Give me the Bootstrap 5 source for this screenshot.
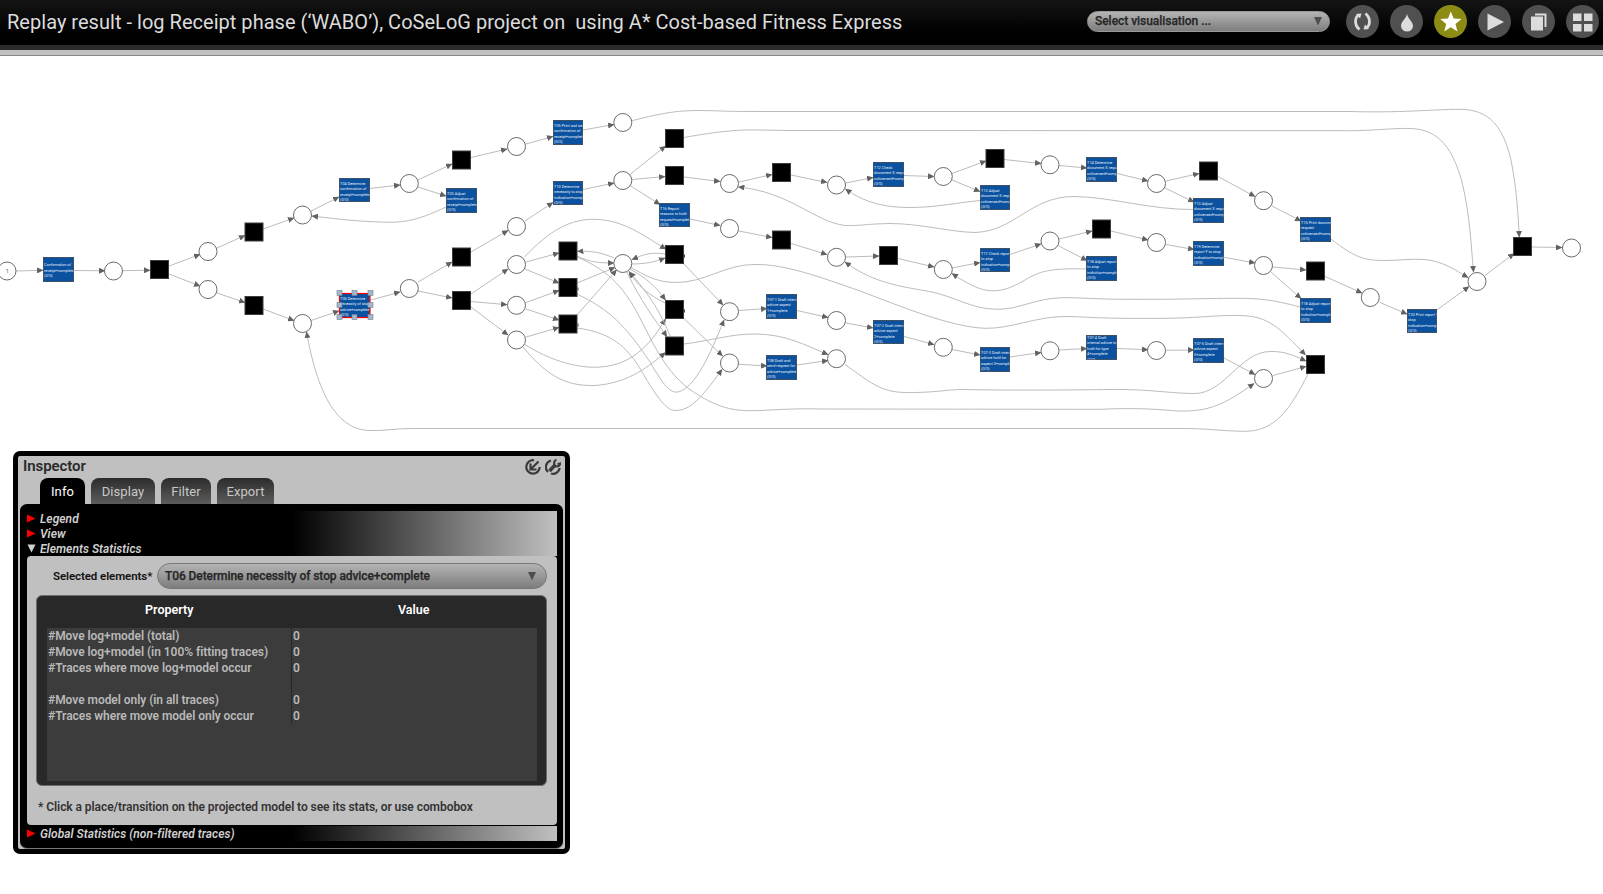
<!DOCTYPE html>
<html lang="en">
<head>
<meta charset="utf-8">
<title>Replay result</title>
<link href="https://cdn.jsdelivr.net/npm/bootstrap@5.3.0/dist/css/bootstrap.min.css" rel="stylesheet">
<script src="https://cdn.jsdelivr.net/npm/bootstrap@5.3.0/dist/js/bootstrap.bundle.min.js"></script>
<style>
body{font-family:Roboto,sans-serif;background:#fff;height:894px;line-height:1.2}
.topbar{height:56px;background:linear-gradient(#141414,#000 34px,#000 45px,#2b2b2b 45px,#2b2b2b 50px,#c0c0c0 50px,#c0c0c0 55px,#7f878d 55px)}
.topbar-in{height:42px;padding:0 4px 0 7px}
.page-title{font-size:20px;font-weight:400;color:#dcdcdc;letter-spacing:.026px;white-space:pre;padding-top:2px}
.combo{background:linear-gradient(#b4b4b4,#7d7d7d);border:1px solid #777;border-radius:14px;color:#262626;font-weight:500;-webkit-text-stroke:.25px #262626}
.combo-top{width:243px;height:21px;font-size:12px;padding:1px 7px 0;margin-right:16px;border-color:#999;letter-spacing:-.04px}
.combo-main{width:390px;height:26px;font-size:12px;padding:1px 10px 0 7px;letter-spacing:-.085px}
.tool-icon{width:33px;height:33px}
.canvas{height:838px}
.net{position:absolute;left:0;top:0}
.edge{fill:none;stroke:#bcbcbc;stroke-width:1}
.place{fill:#fff;stroke:#6b6b6b;stroke-width:1}
.silent{fill:#000;stroke:#3c3c3c;stroke-width:1}
.task{fill:#0a519f;stroke:#3f5265;stroke-width:1}
.net text{font-size:3.85px;font-weight:400;fill:#e6eefa}
.inspector{left:13px;top:451px;width:557px;height:403px;border:5px solid #000;border-radius:7px;background:#c0c0c0;padding:0 2px 1px}
.insp-head{height:22px;padding:1px 1px 0 3px}
.insp-title{font-size:15px;font-weight:600;color:#2a2a2a;letter-spacing:-.08px}
.tabs{gap:6px;padding-left:20px;height:26px}
.tabs>span{height:26px;border-radius:8px 8px 0 0;background:linear-gradient(#2c2c2c,#5c5c5c);color:#c8c8c8;font-size:13px;padding-top:6px;text-align:center;letter-spacing:.1px}
.tabs>span.on{background:#000;color:#fff}
.inner{background:#000;border-radius:7px;padding:7px 6px 6px 7px;height:344px;box-shadow:0 1px #777}
.fold{background:linear-gradient(90deg,#000 50%,#c0c0c0)}
.fold>div{height:15px;font-size:12px;font-weight:600;font-style:italic;color:#d0d0d0;line-height:15px;padding-top:1px;gap:4px;letter-spacing:.04px}
.fold svg{margin-top:-1px}
.stats{background:#c0c0c0;height:269px;margin-bottom:1px;border-radius:4px;padding:7px 10px 0 9px}
.sel-label{font-size:11.5px;font-weight:600;color:#111;padding:1px 0 0 17px;letter-spacing:-.08px}
.grid-box{height:191px;background:#282828;border:1px solid #6c6c6c;border-radius:6px;margin-top:6px;padding:0 9px 4px 10px;font-size:12px;font-weight:600}
.grid-head{height:32px;color:#fff;padding:6px 1px 0 0;font-size:12.5px}
.grid-body{height:153px;background:#3c3c3c;color:#b9b9b9}
.grid-row{height:16px;line-height:16px;letter-spacing:-.04px}
.grid-row>span:first-child{width:245px;border-right:1px solid #272727;padding-left:1px}
.grid-row>span:last-child{padding-left:1px}
.note{font-size:12px;font-weight:600;color:#333;padding:14px 0 0 2px;letter-spacing:-.06px}
</style>
</head>
<body class="overflow-hidden">
<header class="topbar">
  <div class="topbar-in d-flex align-items-center">
    <h1 class="page-title mb-0 me-auto">Replay result - log Receipt phase (‘WABO’), CoSeLoG project on  using A* Cost-based Fitness Express</h1>
    <div class="combo combo-top d-flex align-items-center justify-content-between"><span>Select visualisation ...</span><svg width="8" height="9"><path d="M0 0H8L4 8.500Z" fill="#4d4d4d"/></svg></div>
    <div class="d-flex" style="gap:11px">
      <svg class="tool-icon" viewBox="0 0 33 33"><circle cx="16.5" cy="16.5" r="16.5" fill="#505050"/><g fill="none" stroke="#dcdcdc" stroke-width="2.8"><path d="M13 9.5C8.300 13 8.300 20 13.500 24.500"/><path d="M20 23.500C24.700 20 24.700 13 19.500 8.500"/></g><path d="M10 9L15.500 8.500 14 13.500ZM23 24L17.500 24.500 19 19.500Z" fill="#dcdcdc"/></svg>
      <svg class="tool-icon" viewBox="0 0 33 33"><circle cx="16.5" cy="16.5" r="16.5" fill="#505050"/><path d="M17 8.500C17.500 14 23 16 23 21A6 5.500 0 0 1 11 21C11 16 16.500 14 17 8.500Z" fill="#dcdcdc"/></svg>
      <svg class="tool-icon" viewBox="0 0 33 33"><circle cx="16.5" cy="16.5" r="16.5" fill="#8c8b14"/><path d="M16.800 6.500L19.700 13.600 27.500 14 21.500 19 23.500 26.500 16.800 22.300 10.200 26.500 12.200 19 6.200 14 14 13.600Z" fill="#fff"/></svg>
      <svg class="tool-icon" viewBox="0 0 33 33"><circle cx="16.5" cy="16.5" r="16.5" fill="#505050"/><path d="M9.500 8.500L26 17 9.500 25.500Z" fill="#dcdcdc"/></svg>
      <svg class="tool-icon" viewBox="0 0 33 33"><circle cx="16.5" cy="16.5" r="16.5" fill="#505050"/><path d="M13 8.500H24.500V22H22.500V10.500H13ZM9 11.500H21V25.500H9Z" fill="#dcdcdc"/></svg>
      <svg class="tool-icon" viewBox="0 0 33 33"><circle cx="16.5" cy="16.5" r="16.5" fill="#505050"/><path d="M7 8.500H15.500V16H7ZM18 8.500H26.500V16H18ZM7 19H15.500V26.500H7ZM18 19H26.500V26.500H18Z" fill="#dcdcdc"/></svg>
    </div>
  </div>
</header>
<main class="canvas">
  <svg class="net" id="net" width="1603" height="894"><defs><marker id="arr" markerUnits="userSpaceOnUse" markerWidth="7" markerHeight="6" refX="6" refY="3" orient="auto"><path d="M0 0L6.500 3 0 6Z" fill="#626262"/></marker></defs></svg>
  <section class="inspector position-absolute">
    <div class="insp-head d-flex justify-content-between align-items-start">
      <span class="insp-title">Inspector</span>
      <span class="d-flex" style="gap:4px;padding-top:2px;padding-right:1px">
        <svg width="16" height="16" fill="none" stroke="#3a3a3a" stroke-width="2.2"><path d="M9 1.300A6.700 6.700 0 1 0 14.700 8M13.500 2.500L6.500 9.500M5.500 4.500V10.500H11.500"/></svg>
        <svg width="16" height="16" fill="none" stroke="#3a3a3a" stroke-width="2.200"><path d="M6 1.500A6.800 6.800 0 0 0 3 13M6 14.500A6.700 6.700 0 0 0 14.700 9"/><path d="M4.500 12L10 6" stroke-width="3.400"/><path d="M11.500 .8C8 2 8.500 7.500 12 7.500 14 7.300 15 6 15.200 4.500L12.500 5"/></svg>
      </span>
    </div>
    <div class="tabs d-flex"><span class="on" style="width:45px">Info</span><span style="width:64px">Display</span><span style="width:50px">Filter</span><span style="width:57px">Export</span></div>
    <div class="inner position-relative">
      <div class="fold">
        <div class="d-flex align-items-center"><svg width="9" height="9"><path d="M0 .5L8.500 4.500 0 8.500Z" fill="#f00"/></svg>Legend</div>
        <div class="d-flex align-items-center"><svg width="9" height="9"><path d="M0 .5L8.500 4.500 0 8.500Z" fill="#f00"/></svg>View</div>
        <div class="d-flex align-items-center"><svg width="9" height="9"><path d="M.5 .5H8.500L4.500 8.500Z" fill="#d0d0d0"/></svg>Elements Statistics</div>
      </div>
      <div class="stats">
        <div class="d-flex align-items-center justify-content-between"><span class="sel-label">Selected elements*</span>
          <div class="combo combo-main d-flex align-items-center justify-content-between"><span>T06 Determine necessity of stop advice+complete</span><svg width="8" height="9"><path d="M0 0H8L4 8.500Z" fill="#4d4d4d"/></svg></div></div>
        <div class="grid-box">
          <div class="grid-head d-flex text-center"><span class="w-50">Property</span><span class="w-50">Value</span></div>
          <div class="grid-body">
            <div class="grid-row d-flex"><span>#Move log+model (total)</span><span>0</span></div>
            <div class="grid-row d-flex"><span>#Move log+model (in 100% fitting traces)</span><span>0</span></div>
            <div class="grid-row d-flex"><span>#Traces where move log+model occur</span><span>0</span></div>
            <div class="grid-row d-flex"><span></span><span></span></div>
            <div class="grid-row d-flex"><span>#Move model only (in all traces)</span><span>0</span></div>
            <div class="grid-row d-flex"><span>#Traces where move model only occur</span><span>0</span></div>
          </div>
        </div>
        <div class="note">* Click a place/transition on the projected model to see its stats, or use combobox</div>
      </div>
      <div class="fold"><div class="d-flex align-items-center"><svg width="9" height="9"><path d="M0 .5L8.500 4.500 0 8.500Z" fill="#f00"/></svg>Global Statistics (non-filtered traces)</div></div>
    </div>
  </section>
</main>
<script>
const NS='http://www.w3.org/2000/svg', net=document.getElementById('net');
function add(tag,attrs,parent){const e=document.createElementNS(NS,tag);for(const k in attrs)e.setAttribute(k,attrs[k]);(parent||net).appendChild(e);return e;}
// straight arcs: x1 y1 x2 y2
const straight=`16 271 43 270.3;74 270.500 105 270.8;123 270.7 150 270.2;169 266 200 254.500;169 274 200 286;217 248 245 235.500;217 293 245 302.500;263 229 294 218;263 309 294 320.500;311 211 339 197;311 320.500 339 311
370 188.500 400 185;418 180 452 164;418 187 446 196;471 157.500 507 149;526 144 553 136.500;583 130 614 124.500;371 300 400 292;418 282 452 262;418 291 452 298;471 252 508 230.500;525 221 553 202.500;583 189.500 614 183
471 294 508 269;471 301.500 507 304.7;471 307 508 335;526 262 559 253;525 269 559 283;526 302.500 559 290.500;526 309 559 320;526 337 559 327.500;577 283 615 267.500;577 315 616.500 270
630 174.500 665.500 146;632 179.500 665 176.500;630 185.500 660 204.500;684 177 720 181.500;739 182 772 174.500;791 175 827 182.500;846 183 873 177.500;903 175.500 934 176.500;952 173.500 986 161;952 180 980 191.500;1004 159.500 1041 163.500;1059 165.500 1087 168;1117 173.500 1148 181;1166 181 1199 173.500;1165 188 1194 202;1217 176 1255 196.500;1272 206 1301 221
690 219 720 225.500;739 231 772 237.500;791 243.500 827 254.500;846 257 879 256;898 258.500 934 267;952 268 980 262.500;1010 254.500 1041 244;1059 239 1092 231;1058 245.500 1087 260.500;1111 231 1148 240;1166 244.500 1194 249.500;1223 257 1255 263;1273 267 1306 270;1271 272 1301 298.500;1324 276 1362 293;1380 302.500 1407 314;1437 310 1469 286.500;1485 275.500 1514 253.500;1532 247 1562 247.500
684 264 723 305;684 318.500 722.500 356;739 310.500 767 308.500;797 310.500 828 317.500;846 323 873 328;904 336.500 934 344.500;952 349.500 980 355;1010 357 1041 352.500;1059 350 1087 348.500;1117 348.500 1148 349.7;1166 350.3 1194 350;1224 358 1255 374.500;1273 375.500 1306 366.500;739 364.3 767 366;797 365 828 360.500`.split(/[;\n]/);
straight.forEach(s=>{const [a,b,c,d]=s.split(' ');add('path',{class:'edge',d:`M${a} ${b}L${c} ${d}`,'marker-end':'url(#arr)'});});
const curved=[
'M446 207C415 222 400 223 380 222C350 221 330 218 312 216',
'M524.5 257C550 230 570 219 595 219.300C625 220 645 237 666 249',
'M614 258C600 252 592 251 577.500 251.300','M577 256C590 262.500 600 263 614 263',
'M577 257C605 269 622 283 640 318C655 347 668 378 700 396C725 411 740 411 760 410.500C790 409 800 408.500 820 409L1100 409.300C1130 408 1150 408.500 1177 411C1210 412 1225 404 1254 383.500',
'M577 294C610 310 625 325 650 362C664 386 670 393 678 392C695 388 710 355 724 320',
'M577 328C615 333 630 350 645 377C660 402 668 411 676 410.500C690 410 700 400 722 369.500',
'M524 344C560 367 590 368 600 367C635 365 653 340 665.500 319','M523 347C550 380 570 386 595 385.500C630 383 650 365 665.500 352.500',
'M665 254C650 252 645 254 632 259.500','M631 264C645 264 655 262 665 258',
'M630 269C650 280 658 290 665.500 300','M665 303C650 295 640 289 629 271.500',
'M627 272C640 300 655 320 667 336.500','M670 336C662 315 650 295 629.500 272',
'M630 267C645 275 655 282 675 282.500C705 283 725 264 755 264.500C785 264 820 277 860 291C900 306 950 327 985 328.300C1010 329 1035 317 1063 316.500C1085 316.500 1100 319 1163 318.300C1200 318 1215 315 1240 315.500C1270 316 1280 329 1305.500 355',
'M684 344C715 340 730 334 755 334C785 334 805 345 828 354.500',
'M845 364.500C870 382 880 392 905 392.500C935 393 950 389 965 389.500C1000 390.500 1080 390 1110 389.500C1150 389 1170 393.500 1195 393.500C1225 393 1240 352 1270 351.500C1285 351 1295 356 1306 361',
'M631 121C665 112 680 110.500 700 110.500C730 111 720 111.500 760 111.500L1350 111.500C1400 113 1430 109.500 1460 109.300C1490 109.500 1503 127 1511 160C1517 190 1518 215 1519.300 237',
'M684 137.500C720 131 740 129.500 760 130L790 130.500L1340 130.700C1375 131 1390 128 1410 128.500C1440 129 1453 150 1462 182C1470 215 1471 245 1473.500 272',
'M1331 239C1355 258 1365 260.500 1385 260.500C1400 260.500 1410 258.500 1425 259.500C1445 262 1455 270 1468 277.500',
'M980 200.500C955 203 935 207.500 910 207.500C885 207.500 865 203 845.500 189',
'M1194 209.500C1150 210 1110 196.500 1073 196.500C1030 197 1015 231 975 232.500C950 232 920 223.500 890 223.500C865 224 860 226 845 225.500C815 222 790 192 738.500 187',
'M1087 269C1050 268 1040 271 1025 280C995 298 980 292 952 273.500',
'M1300 307C1270 299 1260 298.500 1235 298.300C1200 298.500 1180 299.500 1130 299.300C1100 299.500 1080 297.500 1063 297.700C1035 298 1020 309.500 997 309.300C970 309 955 296 927 291C890 285 870 280 845 262',
'M1308 374C1290 410 1275 431 1245 431.300C1220 431 1210 428.500 1180 428.500L410 428.500C395 428.500 385 431 370 430.500C335 430 317 390 306.500 332'];
curved.forEach(d=>add('path',{class:'edge',d,'marker-end':'url(#arr)'}));
[[7,271],[113.5,271],[208,251.5],[208,289.5],[302.5,215],[302.5,323.5],[409.3,183.5],[409.3,288.5],[516.5,146.5],[516.5,226.5],[516.5,264.5],[516.5,305.3],[516.5,340],[622.8,122.5],[622.8,180.5],[622.8,263.5],[729.5,183.5],[729.5,228.5],[729.5,311.7],[729.5,363],[836.5,185],[836.5,257.3],[836.5,320.5],[836.5,358.7],[943.3,176.5],[943.3,269.5],[943.3,347.3],[1050,164.8],[1050,241],[1050,350.8],[1156.5,183.5],[1156.5,242.5],[1156.5,350.5],[1263.5,200.7],[1263.5,265.5],[1263.5,378.5],[1370.3,297.5],[1477,281.5],[1571.5,248]]
.forEach(([x,y])=>add('circle',{class:'place',cx:x,cy:y,r:9}));
[[159.5,269.5],[254,232],[254,305.5],[461.5,160],[461.5,257],[461.5,300.5],[568,251],[568,287.5],[568,324],[674.5,138.5],[674.5,175.5],[674.5,254.5],[674.5,309.5],[674.5,346],[781.5,172.5],[781.5,240],[888.5,255.5],[995,158.5],[1101.5,229],[1208.5,171],[1315.5,271],[1315.5,364.5],[1522.5,246.5]]
.forEach(([x,y])=>add('rect',{class:'silent',x:x-9,y:y-9,width:18,height:18}));
[[577.5,288.5],[577.5,324.5],[684,255.5],[684,310.5]].forEach(([x,y])=>add('rect',{x:x,y:y-1,width:1,height:3,fill:'#444'}));
const tasks=[[43.5,257.5,'Confirmation of|receipt+complete'],[339.5,178.5,'T04 Determine|confirmation of|receipt+complete'],[446.5,188.5,'T03 Adjust|confirmation of|receipt+complete'],[553.5,120.5,'T05 Print and send|confirmation of|receipt+complete'],[553.5,181.5,'T10 Determine|necessity to stop|indication+complete'],[339.5,293.5,'T06 Determine|necessity of stop|advice+complete'],[659.5,203.5,'T16 Report|reasons to hold|request+complete'],[766.5,294.5,'T07-1 Draft intern|advice aspect|1+complete'],[766.5,355.5,'T08 Draft and|send request for|advice+complete'],[873.5,162.5,'T12 Check|document X request|unlicensed+complete'],[873.5,320.5,'T07-2 Draft intern|advice aspect|2+complete'],[980.5,185.5,'T13 Adjust|document X request|unlicensed+complete'],[980.5,248.5,'T17 Check report Y|to stop|indication+complete'],[980.5,347.5,'T07-3 Draft intern|advice hold for|aspect 3+complete'],[1086.5,157.5,'T14 Determine|document X request|unlicensed+complete'],[1086.5,256.5,'T18 Adjust report Y|to stop|indicition+complete'],[1086.5,335.5,'T07-4 Draft|internal advice to|hold for type|4+complete'],[1193.5,198.5,'T13 Adjust|document X request|unlicensed+complete'],[1193.5,241.5,'T19 Determine|report Y to stop|indication+complete'],[1193.5,338.5,'T07-5 Draft intern|advice aspect|5+complete'],[1300.5,217.5,'T15 Print document X|request|unlicensed+complete'],[1300.5,298.5,'T18 Adjust report Y|to stop|indicition+complete'],[1407.5,309.5,'T20 Print report Y|stop|indication+complete']];
tasks.forEach(([x,y,label])=>{
  const w=[553.5,980.5,1407.5].includes(x)?29:30, h=[178.5,181.5,203.5,248.5,309.5,320.5].includes(y)?23:24;
  add('rect',{class:'task',x,y,width:w,height:h});
  const lines=(label+'|(0/0)').split('|'), box=add('svg',{x:x,y:y,width:w,height:h});
  const first=14.3-(lines.length-1)*2.75;
  lines.forEach((t,i)=>{add('text',{x:.6,y:first+i*5.5},box).textContent=t;});
});
add('text',{x:6.1,y:272.8,style:'fill:#444;font-size:5px'}).textContent='1';
// selection frame of the picked transition
add('rect',{x:339.5,y:293.5,width:30.5,height:24,fill:'none',stroke:'#f00','stroke-width':1.2});
[[339.5,293],[354.5,293],[370.5,293],[339.5,305],[370.5,305],[339.5,317],[354.5,317],[370.5,317]].forEach(([x,y])=>add('rect',{x:x-2.5,y:y-2.5,width:5,height:5,fill:'#a4b7cb',stroke:'#6d7f92','stroke-width':.6}));
</script>
</body>
</html>
